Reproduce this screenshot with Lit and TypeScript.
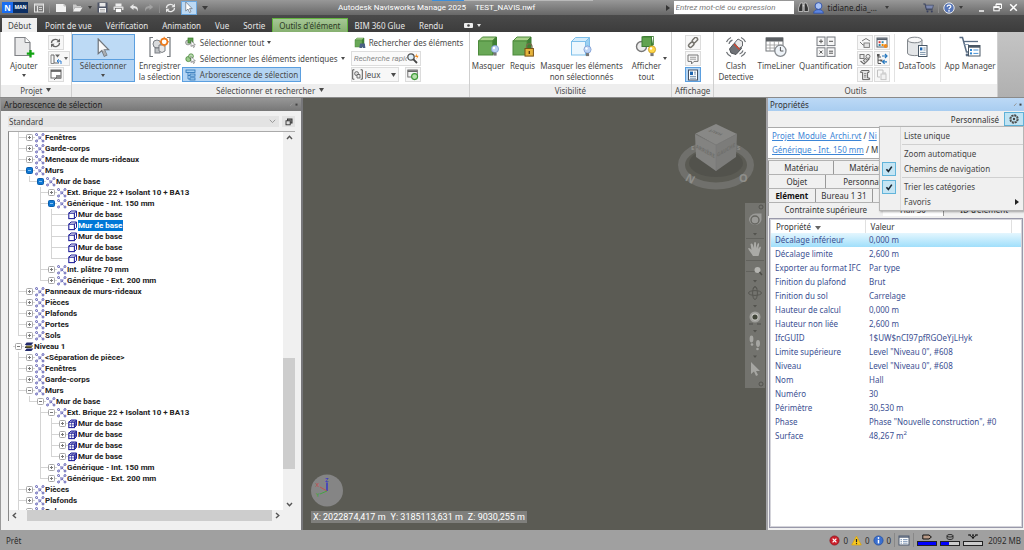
import { LitElement, html, svg, css, nothing, TemplateResult } from "lit";
import { customElement, property } from "lit/decorators.js";
import { classMap } from "lit/directives/class-map.js";

type Icon = { w: number; h: number; body: TemplateResult };

const cube = (x: number, y: number, s: number) => svg`
  <g transform="translate(${x} ${y}) scale(${s})">
    <path d="M0 4 L4 0 H18 L14 4Z" fill="#a9d18a" stroke="#4d8a3c"/>
    <path d="M14 4 L18 0 V14 L14 18Z" fill="#3f7f35" stroke="#3f7f35"/>
    <rect x="0" y="4" width="14" height="14" fill="#69a857" stroke="#4d8a3c"/>
  </g>`;
const bulb = (x: number, y: number, c: string, e: string) => svg`
  <g transform="translate(${x} ${y})">
    <circle cx="4" cy="4" r="3.6" fill="${c}" stroke="${e}" stroke-width=".8"/>
    <circle cx="3" cy="3" r="1.2" fill="#fff"/>
    <rect x="2.4" y="7.6" width="3.2" height="3" fill="#777"/>
  </g>`;
const lens = svg`<circle cx="4" cy="4" r="3.2" fill="#dff0fb" stroke="#555" stroke-width="1.3"/><path d="M6.4 6.4L10 10" stroke="#444" stroke-width="1.8"/>`;
const arrow = (f: string, k: string) => svg`<path d="M1 0 V12 L4 9.4 L6 14 L8 13 L6 8.8 H9.6Z" fill="${f}" stroke="${k}" stroke-width="1"/>`;
const dots = svg`<g stroke="#9c9cd2" stroke-width=".8"><path d="M1.5 1.5L8 8M8 1.5L1.5 8"/></g>
  <g fill="#e6e6f6" stroke="#4a4aaa" stroke-width=".8"><circle cx="1.5" cy="1.5" r="1"/><circle cx="8" cy="1.5" r="1"/><circle cx="1.5" cy="8" r="1"/><circle cx="8" cy="8" r="1"/><circle cx="4.8" cy="4.8" r="1"/></g>`;
const box = svg`<path d="M.8 3.2L3 1H8.5V6.4L6.4 8.6M6.4 3.2L8.5 1" fill="none" stroke="#23239a" stroke-width="1"/><rect x=".8" y="3.2" width="5.6" height="5.4" fill="#fff" stroke="#23239a" stroke-width="1.1"/>`;
const gear = svg`<circle cx="5" cy="5" r="4" fill="none" stroke="#444" stroke-width="1.3" stroke-dasharray="2.2 .9"/><circle cx="5" cy="5" r="3.1" fill="none" stroke="#555" stroke-width=".8"/><circle cx="5" cy="5" r="1.2" fill="#444"/>`;

const icons: Record<string, Icon> = {
  panel: { w: 10, h: 10, body: svg`<rect x=".5" y="1" width="9" height="8" fill="none" stroke="#e4e4e4"/><path d="M.5 2H9.5M3.5 3V9" stroke="#e4e4e4" stroke-width="1.2"/><path d="M5 4.5H8M5 6.5H8" stroke="#e4e4e4" stroke-width=".8"/>` },
  file: { w: 12, h: 10, body: svg`<path d="M1 1H9L11 3V9H1Z" fill="#f2f2f2"/><path d="M9 1V3H11" fill="none" stroke="#999" stroke-width=".6"/>` },
  folder: { w: 11, h: 10, body: svg`<path d="M1 1.5H4L5 3H9V4H3L1 8Z" fill="#c9c9c9"/><path d="M3 4.5H10.5L8 8.5H1Z" fill="#efefef"/>` },
  save: { w: 11, h: 11, body: svg`<rect x=".5" y=".5" width="10" height="10" fill="#4e5566"/><rect x="2.5" y="1" width="6" height="3.5" fill="#e8e8e8"/><rect x="2" y="6" width="7" height="4.5" fill="#f6f6f6"/><path d="M3 7.5H8M3 9H8" stroke="#888" stroke-width=".6"/>` },
  print: { w: 11, h: 10, body: svg`<rect x="2.5" y=".5" width="6" height="3" fill="#eee"/><rect x=".5" y="3.5" width="10" height="3.6" rx=".6" fill="#dedede"/><rect x="2.5" y="5.5" width="6" height="4" fill="#fff" stroke="#555" stroke-width=".6"/>` },
  undo: { w: 10, h: 10, body: svg`<path d="M4.5 1L.8 4L4.5 7V5.2C7 5 8 6 8.4 8.4C9.8 5 8 2.9 4.5 2.9Z" fill="#e6e6e6"/>` },
  redo: { w: 10, h: 10, body: svg`<path d="M5.5 1L9.2 4L5.5 7V5.2C3 5 2 6 1.6 8.4C.2 5 2 2.9 5.5 2.9Z" fill="#a2a2a2"/>` },
  sync: { w: 11, h: 10, body: svg`<path d="M1.5 5A4 3.5 0 0 1 8.6 2.8M9.5 5A4 3.5 0 0 1 2.4 7.2" fill="none" stroke="currentColor" stroke-width="1.3"/><path d="M10 .5V4.2H6.4ZM1 9.5V5.8H4.6Z" fill="currentColor"/>` },
  cursorS: { w: 8, h: 11, body: svg`<g transform="scale(.75)">${arrow("#fff", "#6b7480")}</g>` },
  binoc: { w: 11, h: 11, body: svg`<path d="M2.5 1H4.8V9.5H.6V6ZM8.5 1H6.2V9.5H10.4V6Z" fill="#333" stroke="#ddd" stroke-width=".7"/><path d="M4.8 3.8H6.2" stroke="#ddd"/>` },
  user: { w: 11, h: 12, body: svg`<circle cx="5.5" cy="4" r="3.4" fill="#a9c3f5" stroke="#2b4ea8" stroke-width=".9"/><path d="M.6 11.2C1 8.4 3 7.6 5.5 7.6S10 8.4 10.4 11.2Z" fill="#5d86e0" stroke="#2b4ea8" stroke-width=".8"/>` },
  cart: { w: 11, h: 10, body: svg`<path d="M.3 1H2L3.6 6.8H9.6" fill="none" stroke="#39415e" stroke-width="1.1"/><path d="M2.5 2.2H10.5L9.4 5.8H3.4Z" fill="#7c88b0" stroke="#39415e" stroke-width=".6"/><circle cx="4.5" cy="8.6" r="1" fill="#39415e"/><circle cx="8.8" cy="8.6" r="1" fill="#39415e"/>` },
  help: { w: 12, h: 12, body: svg`<circle cx="6" cy="6" r="5.2" fill="#5675b8" stroke="#e8e8e8" stroke-width="1"/><path d="M4.2 4.8C4.2 2.4 7.9 2.5 7.8 4.7C7.7 5.9 6 5.8 6 7.2" fill="none" stroke="#fff" stroke-width="1.2"/><circle cx="6" cy="8.9" r=".8" fill="#fff"/>` },
  min: { w: 9, h: 9, body: svg`<path d="M2 8H7" stroke="#fff" stroke-width="1.4"/>` },
  restore: { w: 9, h: 9, body: svg`<path d="M3 3.5V1H8.5V5.5H6.5" fill="none" stroke="#fff"/><path d="M3 1.4H8.5M.8 4.2H6.2" stroke="#fff" stroke-width="1.4"/><rect x=".8" y="3.8" width="5.4" height="4" fill="none" stroke="#fff"/>` },
  close: { w: 9, h: 9, body: svg`<path d="M1.2 1.2L7.8 7.8M7.8 1.2L1.2 7.8" stroke="#fff" stroke-width="1.5"/>` },
  cam: { w: 9, h: 5, body: svg`<rect width="9" height="5" rx="1" fill="#eee"/><circle cx="4.5" cy="2.5" r="1.3" fill="#444"/>` },
  add: { w: 22, h: 22, body: svg`<path d="M2 1.5H12L17 6.5V19.5H2Z" fill="#e9e9ea" stroke="#808286" stroke-width="1.2"/><path d="M12 1.5V6.5H17" fill="#fff" stroke="#808286"/><path d="M17.5 14V21.5M13.8 17.7H21.3" stroke="#12a312" stroke-width="2.3"/>` },
  reset: { w: 12, h: 12, body: svg`<path d="M1 2H4V10H9" fill="none" stroke="#666"/><path d="M1 2V10.5H4" fill="none" stroke="#888"/><path d="M5 1.5H10L7.5 4.5Z" fill="#666"/><path d="M7 8H11V11M7 8L9 6.3M7 8L9 9.8" fill="none" stroke="#2b7cd3"/>` },
  options: { w: 12, h: 12, body: svg`<rect x="1" y="1" width="10" height="8" fill="#fff" stroke="#666"/><path d="M1 2H11" stroke="#555" stroke-width="1.6"/><rect x="6" y="6" width="5" height="4" fill="#8b8b8b"/><path d="M4 11L7 8" stroke="#666"/>` },
  cursorL: { w: 14, h: 20, body: svg`<g transform="translate(1 1) scale(1.22)">${arrow("#fafafa", "#70757b")}<path d="M6 8.8L8 13L6 14L4.6 10Z" fill="#a8acb0"/></g>` },
  saveSel: { w: 22, h: 22, body: svg`<path d="M4 1.5H1V20.5H4M18 1.5H21V20.5H18" fill="none" stroke="#72777c" stroke-width="1.2"/><circle cx="8" cy="8" r="4" fill="#d9dbdd" stroke="#7b7f84"/><rect x="6" y="12" width="5" height="5" fill="#bfc2c5" stroke="#7b7f84"/><path d="M10 9L16 9L16 15Q13 18 10 15Z" fill="#e8e8e8" stroke="#7b7f84"/><circle cx="15.2" cy="5.8" r="3.2" fill="#fff" stroke="#ee7b1b" stroke-width="1.6"/><path d="M15.2 .8V3M15.2 8.6V10.8M10.4 5.8H12.4M18 5.8H20" stroke="#ee7b1b"/>` },
  selAll: { w: 12, h: 11, body: svg`<circle cx="3" cy="5.5" r="2.4" fill="#cfd3cf" stroke="#777" stroke-width=".7"/><rect x="3" y="1" width="5" height="5" fill="#5d9f4c" stroke="#3b7a2d" stroke-width=".7"/><g transform="translate(5.5 3.5) scale(.5)">${arrow("#fff", "#444")}</g>` },
  selSame: { w: 12, h: 11, body: svg`<circle cx="3.4" cy="6" r="2.6" fill="#9dcc8e" stroke="#3b7a2d" stroke-width=".7"/><circle cx="6" cy="3.2" r="2.4" fill="#b9dcae" stroke="#3b7a2d" stroke-width=".7"/><g transform="translate(5.5 3.5) scale(.5)">${arrow("#fff", "#444")}</g>` },
  tree: { w: 12, h: 12, body: svg`<path d="M3 3V10H6M3 6.5H6" fill="none" stroke="#2a72b5" stroke-width=".8"/><g fill="#9fcdf2" stroke="#2a72b5" stroke-width=".8"><rect x="1" y="1" width="9" height="2.4"/><rect x="5" y="5" width="5" height="2.2"/><rect x="5" y="8.8" width="5" height="2.2"/></g>` },
  find: { w: 12, h: 12, body: svg`${cube(1, 1, 0.5)}<path d="M6 6.4L5.4 11H8L8.4 8.6L8.8 11H11.4L10.8 6.4Z" fill="#4a5f86"/>` },
  quick: { w: 12, h: 12, body: svg`${lens}<path d="M9.5 .5L8 4H10L9.4 6.4L11.6 2.8H9.8Z" fill="#f08a1c"/>` },
  sets: { w: 11, h: 11, body: svg`<path d="M2.4 .8H.7V10.2H2.4M8.6 .8H10.3V10.2H8.6" fill="none" stroke="#555"/><circle cx="4.6" cy="4.6" r="2" fill="#ddd" stroke="#555" stroke-width=".8"/><path d="M5 5.5H8V9H5Z" fill="#eee" stroke="#555" stroke-width=".8"/>` },
  setsMgr: { w: 12, h: 12, body: svg`<rect x=".8" y="1" width="9.5" height="7" fill="#f4f4f4" stroke="#666" stroke-width=".9"/><path d="M.8 2.2H10.3" stroke="#666" stroke-width="1.6"/><circle cx="7.6" cy="7.6" r="3" fill="#b6e0ac" stroke="#3d9a36" stroke-width="1.1"/>` },
  hide: { w: 22, h: 22, body: svg`${cube(1.5, 1, 1)}${bulb(14, 9, "#bcd3f5", "#7d9cd2")}` },
  need: { w: 22, h: 22, body: svg`${cube(1, 1, 1)}<path d="M14.5 13V10.5A2.7 2.7 0 0 1 20 10.5V13" fill="none" stroke="#7b6a4a" stroke-width="1.2"/><rect x="13" y="12.5" width="8.4" height="7.6" fill="#e5b33c" stroke="#7a5316"/><rect x="16.6" y="15" width="1.4" height="3" fill="#5a3c10"/>` },
  hideRest: { w: 22, h: 22, body: svg`<path d="M1.5 5.5L5.5 1.5H19.5L15.5 5.5Z" fill="#d5ecfb" stroke="#7dbfea"/><path d="M15.5 5.5L19.5 1.5V15.5L15.5 19Z" fill="#9bd0f2" stroke="#7dbfea"/><rect x="1.5" y="5.5" width="14" height="13.5" fill="#ecf7fe" stroke="#7dbfea"/>${bulb(13.5, 9.5, "#bcd3f5", "#7d9cd2")}` },
  showAll: { w: 22, h: 22, body: svg`<circle cx="6.5" cy="10.5" r="5" fill="#ececec" stroke="#777" stroke-width="1.4"/><rect x="7" y="1" width="9.5" height="9.5" fill="#62a34f" stroke="#3f7f35"/><path d="M7 1L9 0H18.5L16.5 1M18.5 0V9L16.5 10.5" fill="#3f7f35" stroke="#3f7f35" stroke-width=".6"/>${bulb(13, 9.5, "#ffd84a", "#c9991c")}` },
  link: { w: 12, h: 12, body: svg`<g fill="none" stroke="#77756f" stroke-width="1.5"><rect x="5.6" y="1.5" width="6" height="3.6" rx="1.8" transform="rotate(-45 8 4)"/><rect x="1.4" y="6.2" width="6" height="3.6" rx="1.8" transform="rotate(-45 4 8)"/></g>` },
  note: { w: 12, h: 12, body: svg`<path d="M1 2H11V8.4H7L4.5 11V8.4H1Z" fill="#f6f6f6" stroke="#777"/><path d="M3 4.3H9M3 6.2H9" stroke="#888" stroke-width=".8"/>` },
  props: { w: 12, h: 12, body: svg`<rect x="1.5" y="1" width="9" height="10" fill="#fff" stroke="#444f60"/><rect x="3" y="2.6" width="3" height="3.4" fill="#1d65b0"/><path d="M7 3.2H9M7 5H9M3 7.4H9M3 9.2H9" stroke="#56789c" stroke-width=".8"/>` },
  clash: { w: 22, h: 22, body: svg`<g fill="none" stroke="#6f7377" stroke-width="1.2"><path d="M1.5 6A8 8 0 0 1 6 1.5M4 8A5 5 0 0 1 7.5 4.2M20.5 16A8 8 0 0 1 16 20.5M18 14.5A5 5 0 0 1 14.5 18M20.5 6A8 8 0 0 0 16 1.5M1.5 16A8 8 0 0 0 6 20.5"/></g><path d="M4.5 13L9 7.5H14.5L16.5 12.5L11 18.5L6 17Z" fill="#6f7276" stroke="#515458"/><path d="M9.5 7L13 3L17.5 5.5V10L14 12.5L11.5 9.5Z" fill="#e9e9e9" stroke="#66696d"/><path d="M9 8L14.5 13.5" stroke="#d8442b" stroke-width="1.3"/>` },
  timeline: { w: 22, h: 22, body: svg`<rect x="1" y="2" width="17" height="13" fill="#fff" stroke="#73777b"/><rect x="1" y="1.5" width="17" height="4" fill="#5c6064"/><path d="M1 9H18M1 12H18M5 5V15M9.3 5V15M13.6 5V15" stroke="#999" stroke-width=".8"/><circle cx="15.4" cy="14.8" r="5.6" fill="#eef3f8" stroke="#85898e" stroke-width="1.3"/><path d="M15.4 11V15H18.4" fill="none" stroke="#555"/>` },
  quant: { w: 20, h: 22, body: svg`<g fill="#f7f7f7" stroke="#777b80"><rect x="1" y="1" width="8" height="8.6"/><rect x="11" y="1" width="8" height="8.6"/><rect x="1" y="11.8" width="8" height="8.6"/><rect x="11" y="11.8" width="8" height="8.6"/></g><path d="M3 5.3H7M5 3.3V7.3M13 5.3H17M3.5 14.6L6.5 17.6M6.5 14.6L3.5 17.6M13 15.2H17M13 17.2H17" stroke="#555"/>` },
  tool1: { w: 12, h: 12, body: svg`<path d="M3 4L7 1.5L11 4" fill="none" stroke="#777"/><path d="M1 5L4 8H10" fill="none" stroke="#777"/><rect x="5" y="6" width="5.4" height="4.4" fill="#e3e3e3" stroke="#777" stroke-width=".9"/>` },
  tool2: { w: 12, h: 12, body: svg`<rect x="1" y="1" width="10" height="9" fill="#fff" stroke="#58626e"/><path d="M1 2.2H11" stroke="#58626e" stroke-width="1.8"/><g><rect x="2.6" y="4.2" width="2" height="2" fill="#d33"/><rect x="5.6" y="4.2" width="2" height="2" fill="#38a"/><rect x="2.6" y="7" width="2" height="2" fill="#38a"/><rect x="5.6" y="7" width="2" height="2" fill="#e80"/></g><circle cx="9.6" cy="9" r="2" fill="#f08a1c"/>` },
  tool3: { w: 12, h: 12, body: svg`<rect x="1" y="1.5" width="4" height="4" fill="#eee" stroke="#777"/><circle cx="9" cy="3.4" r="2" fill="#eee" stroke="#777"/><path d="M1.5 8L5 11L10.5 5.5" fill="none" stroke="#666" stroke-width="1.1"/><rect x="5" y="6" width="3" height="3" fill="#ddd" stroke="#777" transform="rotate(45 6.5 7.5)"/>` },
  tool4: { w: 12, h: 12, body: svg`<path d="M2 1.5V10.5H5M2 4H5M2 7.2H5" fill="none" stroke="#555"/><rect x="1" y="1" width="2.6" height="2.4" fill="#555"/><rect x="4.4" y="6.6" width="2" height="2" fill="#555"/><path d="M6 3H11M9 1L11 3L9 5M11 8.8H6.6M8.6 6.8L6.6 8.8L8.6 10.8" fill="none" stroke="#2476bd" stroke-width="1.2"/>` },
  tool5: { w: 12, h: 12, body: svg`<path d="M2.4 1.5H10V3.4H8.6V9H10.6V10.6H3.6V3.4H1.4Z" fill="#e5e5e5" stroke="#666"/><path d="M5 4.6H7.4M5 6.4H7.4M5 8H7.4" stroke="#777" stroke-width=".8"/>` },
  tool6: { w: 12, h: 12, body: svg`<path d="M4 1H1.5V8H4M7 3.6V1H4" fill="none" stroke="#c2c2c2"/><rect x="5" y="5" width="5" height="5.6" fill="#f1f1f1" stroke="#c6c6c6"/><path d="M6 4H10" stroke="#c2c2c2"/>` },
  data: { w: 22, h: 22, body: svg`<path d="M1.5 4V17C1.5 20.5 16 20.5 16 17V4Z" fill="#e4e6e8" stroke="#83888d"/><ellipse cx="8.8" cy="4" rx="7.2" ry="2.8" fill="#f8f8f8" stroke="#83888d"/><rect x="12.5" y="9.5" width="8.5" height="11" fill="#fff" stroke="#4a5866"/><rect x="14" y="11.4" width="2.4" height="3" fill="#1d65b0"/><path d="M17.4 12H19.6M17.4 14H19.6M14 16.4H19.6M14 18.4H19.6" stroke="#5b7894" stroke-width=".8"/>` },
  appMgr: { w: 22, h: 22, body: svg`<path d="M.5 1.5H3.5L7.5 16H12" fill="none" stroke="#5a6d84" stroke-width="1.5"/><path d="M4.6 5.5H19" stroke="#5a6d84" stroke-width="1.3"/><path d="M5.5 8.5H10" stroke="#8fa1b5"/><circle cx="8" cy="19" r="1.4" fill="#5a6d84"/><rect x="9.5" y="9.5" width="11.5" height="10.5" fill="#fff" stroke="#4a5866"/><rect x="9.5" y="9.3" width="11.5" height="2.4" fill="#4a5866"/><rect x="11" y="13" width="2" height="2" fill="#2f86d2"/><rect x="11" y="16.4" width="2" height="2" fill="#2f86d2"/><path d="M14.4 14H19.4M14.4 17.4H19.4" stroke="#4793d8"/>` },
  dots: { w: 10, h: 10, body: dots },
  box: { w: 10, h: 10, body: box },
  boxes: { w: 10, h: 10, body: svg`${box}<path d="M3.6 3.2V8.6M.8 5.9H8.4M2.6 2L8 2M5.6 1L3.6 3.2M7.5 2.2V7.6" stroke="#23239a" stroke-width=".7"/>` },
  level: { w: 10, h: 10, body: svg`<path d="M2.6 .6H9.4L7.4 3H.8ZM2.6 6.4H9.4L7.4 9H.8Z" fill="#222a6c"/><path d="M2 3.6H9L7.4 6H.8Z" fill="#222"/><path d="M2.2 4.8H8" stroke="#c9b53a" stroke-width=".8"/>` },
  gear: { w: 10, h: 10, body: gear },
  dup: { w: 8, h: 8, body: svg`<rect x="2.5" y="1" width="4.5" height="4" fill="#888" stroke="#333"/><rect x="1" y="2.8" width="4.2" height="4" fill="#ddd" stroke="#333" stroke-width=".9"/>` },
  chev: { w: 7, h: 5, body: svg`<path d="M.8 .8L3.5 3.6L6.2 .8" fill="none" stroke="#999"/>` },
  up: { w: 7, h: 7, body: svg`<path d="M1 5L3.5 2.2L6 5" fill="none" stroke="#555" stroke-width="1.4"/>` },
  down: { w: 7, h: 7, body: svg`<path d="M1 2L3.5 4.8L6 2" fill="none" stroke="#555" stroke-width="1.4"/>` },
  left: { w: 7, h: 7, body: svg`<path d="M5 1L2.2 3.5L5 6" fill="none" stroke="#555" stroke-width="1.4"/>` },
  right: { w: 7, h: 7, body: svg`<path d="M2 1L4.8 3.5L2 6" fill="none" stroke="#555" stroke-width="1.4"/>` },
  check: { w: 8, h: 8, body: svg`<path d="M1.4 4.2L3.4 6.4L6.8 1.6" fill="none" stroke="#1c2733" stroke-width="1.6"/>` },
  pin: { w: 9, h: 5, body: svg`<path d="M1 4L3.4 1.4" stroke="#999"/><rect x="6.5" y="1.6" width="2" height="2" fill="#444"/>` },
  err: { w: 11, h: 11, body: svg`<circle cx="5.5" cy="5.5" r="4.6" fill="#cc1f2b" stroke="#8b1118" stroke-width=".7"/><path d="M3.6 3.6L7.4 7.4M7.4 3.6L3.6 7.4" stroke="#fff" stroke-width="1.3"/>` },
  warn: { w: 11, h: 11, body: svg`<path d="M5.5 1L10.3 10H.7Z" fill="#f7c821" stroke="#d9a40c" stroke-width=".7"/><path d="M5.5 4V7.2" stroke="#222" stroke-width="1.2"/><circle cx="5.5" cy="8.6" r=".7" fill="#222"/>` },
  info: { w: 11, h: 11, body: svg`<circle cx="5.5" cy="5.5" r="4.6" fill="#3a6fd0" stroke="#1f4a9c" stroke-width=".7"/><path d="M5.5 4.8V8.4" stroke="#fff" stroke-width="1.5"/><circle cx="5.5" cy="3" r=".9" fill="#fff"/>` },
  sheet: { w: 12, h: 11, body: svg`<rect x="1" y="1" width="10" height="9" fill="#fff" stroke="#4c5a70"/><path d="M1 2H11" stroke="#4c5a70" stroke-width="1.4"/><path d="M2.5 4.6H4M2.5 6.4H4M2.5 8.2H4M5 4.6H9.6M5 6.4H9.6M5 8.2H9.6" stroke="#6481a8" stroke-width=".8"/>` },
  pencil: { w: 10, h: 6, body: svg`<path d="M.8 1H7L9.4 3L7 5H.8Z" fill="#b99a86" stroke="#111" stroke-width="1"/>` },
  disk: { w: 8, h: 6, body: svg`<ellipse cx="4" cy="1.8" rx="3" ry="1.3" fill="none" stroke="#111" stroke-width=".8"/><path d="M1 1.8V4.2C1 5.9 7 5.9 7 4.2V1.8" fill="none" stroke="#111" stroke-width=".8"/>` },
  net: { w: 12, h: 6, body: svg`<path d="M1 1H4M5 1H7M8 1H11M2.5 1L6 4M6 1V5M9.5 1L6 4" fill="none" stroke="#111" stroke-width="1"/>` },
};

const ico = (name: string, cls = "") => {
  const i = icons[name];
  return html`<svg class="ico ${cls}" width=${i.w} height=${i.h} viewBox="0 0 ${i.w} ${i.h}" aria-hidden="true">${i.body}</svg>`;
};
const caret = (w = 4) => html`<svg class="ico caret" width=${w} height=${w > 4 ? 4 : 3} viewBox="0 0 8 6" preserveAspectRatio="none" aria-hidden="true"><path d="M0 0H8L4 6Z" fill="currentColor"/></svg>`;

const base = css`
  * { box-sizing: border-box; }
  button, input, select { font: inherit; color: inherit; margin: 0; padding: 0; border: 0; background: none; border-radius: 0; }
  button { display: inline-flex; align-items: center; justify-content: center; }
  select { appearance: none; }
  .ico { display: block; flex: none; }
`;

@customElement("nw-titlebar")
class Titlebar extends LitElement {
  static styles = [base, css`
    :host { display: flex; align-items: center; height: 15px; color: #e9e9e9;
      background: linear-gradient(90deg, transparent 432px, #3d8fdc 432px 464px, #b9b9b9 464px 593px, transparent 593px) top / 100% 1px no-repeat,
        linear-gradient(#989898, #686868); }
    .left { display: flex; align-items: center; gap: 5px; padding-left: 2px; }
    .logo { display: flex; height: 11px; margin-right: 1px; background: #0d2f63; align-items: center; }
    .n { width: 11px; height: 11px; display: grid; place-items: center; background: #1a6df0; font-weight: 700; line-height: 10px; color: #fff; }
    .man { width: 15px; font-size: 5px; font-weight: 700; text-align: center; color: #fff; }
    .sep { width: 1px; height: 10px; background: #8d8d8d; }
    .on { width: 16px; height: 14px; background: #bcd9f4; border: 1px solid #6ea8de; }
    .caret { color: #3c3c3c; }
    .title { flex: 1; display: flex; gap: 9px; justify-content: center; white-space: nowrap; color: #fff; font-family: Roboto, sans-serif; }
    .right { display: flex; align-items: center; gap: 4px; padding-right: 6px; color: #222; }
    .q { width: 120px; height: 13px; background: #fff; padding: 0 2px; font-style: italic; font-family: Roboto, sans-serif; }
    .q::placeholder { color: #777; opacity: 1; }
    .name { margin-right: 4px; }
    .cart { margin-left: 30px; }
    .gap { display: flex; gap: 7px; margin-left: 10px; }
    .tri { border: 3px solid transparent; border-left: 4px solid #333; border-right: 0; }
  `];
  render() {
    return html`
      <div class="left">
        <span class="logo"><span class="n">N</span><span class="man">MAN</span></span>
        <button aria-label="Menu">${ico("panel")}</button><span class="sep"></span>
        <button aria-label="Nouveau">${ico("file")}</button>
        <button aria-label="Ouvrir">${ico("folder")}</button>${caret()}
        <button aria-label="Enregistrer">${ico("save")}</button>
        <button aria-label="Imprimer">${ico("print")}</button>
        <button aria-label="Annuler">${ico("undo")}</button>
        <button aria-label="Rétablir">${ico("redo")}</button><span class="sep"></span>
        <button aria-label="Actualiser">${ico("sync")}</button>
        <button class="on" aria-label="Sélectionner">${ico("cursorS")}</button>${caret(6)}
      </div>
      <div class="title"><span>Autodesk Navisworks Manage 2025</span><span>TEST_NAVIS.nwf</span></div>
      <div class="right">
        <span class="tri"></span>
        <input class="q" aria-label="Recherche" placeholder="Entrez mot-clé ou expression">
        <button aria-label="Rechercher">${ico("binoc")}</button>
        ${ico("user")}<span class="name">tidiane.dia_...</span>${caret()}
        <button class="cart" aria-label="Boutique">${ico("cart")}</button><span class="sep"></span>
        <button aria-label="Aide">${ico("help")}</button>${caret()}
        <span class="gap">
          <button aria-label="Réduire">${ico("min")}</button>
          <button aria-label="Restaurer">${ico("restore")}</button>
          <button aria-label="Fermer">${ico("close")}</button>
        </span>
      </div>`;
  }
}

@customElement("nw-ribbon")
class Ribbon extends LitElement {
  static styles = [base, css`
    :host { display: block; color: #4a4a4a; }
    .tabs { display: flex; height: 17px; padding-left: 2px; background: linear-gradient(#4a4a4a, #3c3c3c); color: #e6e6e6; align-items: end; }
    .tab { height: 14px; padding: 0 7px; }
    .tab.on { background: #f0f0f0; color: #444; padding: 0 6px; margin-right: 1px; }
    .tab.ctx { background: linear-gradient(#a6c796, #86b070); border: 1px solid #63b53f; border-bottom: 0; color: #2c3a26; padding: 0 6px; }
    .extra { display: flex; align-items: center; gap: 4px; height: 14px; padding-left: 14px; }
    .bar { display: flex; height: 65px; background: linear-gradient(#c4c4c4, #b0b0b0); border-left: 1px solid #ccc; }
    .panel { display: flex; flex-direction: column; border-right: 1px solid #cfcfcf; background: #fff; }
    .body { flex: 1; display: flex; padding: 2px 1px 2px; }
    .foot { height: 13px; display: flex; gap: 4px; align-items: center; justify-content: center; background: #eee; padding: 0 3px 1px; }
    .big { flex-direction: column; justify-content: start; line-height: 11px; padding: 2px 0 0; }
    .big .lab { margin-top: 2px; }
    .big .caret { margin-top: 3px; }
    .pj { gap: 10px; padding: 2px 1px 2px 9px; }
    .col { display: flex; flex-direction: column; gap: 1px; padding-top: 1px; }
    .sq { height: 15px; min-width: 16px; padding: 0 1px; border: 1px solid #dcdcdc; background: #f7f7f7; gap: 2px; color: #666; }
    .row { display: flex; align-items: center; justify-content: start; height: 15px; gap: 3px; padding: 0 2px; white-space: nowrap; border: 1px solid transparent; }
    .hot, .sq.hot { background: #b4d5f4; border: 1px solid #5b9fdf; }
    .select { width: 63px; border: 1px solid #5b9fdf; background: linear-gradient(#bddaf5 24px, #5b9fdf 24px 25px, #b4d4f3 25px); margin-right: 3px; padding-top: 3px; }
    .end { padding: 2px 1px 0; }
    .c1 { padding-left: 0; }
    .c1 .ids { padding-right: 3px; }
    .find { width: 117px; }
    .find .line { display: flex; gap: 6px; height: 15px; }
    .field { display: flex; align-items: center; width: 70px; height: 15px; border: 1px solid #ddd; background: #fafafa; padding-right: 1px; }
    .field input { flex: 1; min-width: 0; padding-left: 2px; font-style: italic; font-family: Roboto, sans-serif; }
    .field input::placeholder { color: #888; opacity: 1; }
    .pick { display: flex; align-items: center; width: 48px; border: 1px solid #ddd; background: #f7f7f7; padding-right: 2px; }
    .pick select { flex: 1; min-width: 0; padding-left: 2px; }
    .vis { gap: 5px; padding-left: 2px; }
    .all { display: flex; align-items: center; gap: 2px; padding: 0 3px 0 4px; }
    .aff { justify-content: center; }
    .out { gap: 4px; padding-left: 4px; }
    .grid { display: grid; grid-template-columns: 16px 16px; gap: 1px; align-content: start; padding-top: 1px; }
    .vs { width: 1px; background: #e2e2e2; }
  `];
  big(icon: string, lines: string[], withCaret = false, cls = "") {
    return html`<button class="big ${cls}">${ico(icon)}<span class="lab">${lines.map((l, i) => html`${i ? html`<br>` : nothing}${l}`)}</span>${withCaret ? caret() : nothing}</button>`;
  }
  render() {
    return html`
      <nav class="tabs">
        <button class="tab on">Début</button>
        ${["Point de vue", "Vérification", "Animation", "Vue", "Sortie"].map((t) => html`<button class="tab">${t}</button>`)}
        <button class="tab ctx">Outils d'élément</button>
        <button class="tab">BIM 360 Glue</button><button class="tab">Rendu</button>
        <span class="extra">${ico("cam")}${caret()}</span>
      </nav>
      <div class="bar">
        <section class="panel">
          <div class="body pj">
            ${this.big("add", ["Ajouter"], true)}
            <div class="col">
              <div><button class="sq" aria-label="Actualiser">${ico("sync")}</button></div>
              <button class="sq" aria-label="Réinitialiser tout">${ico("reset")}${caret()}</button>
              <div><button class="sq" aria-label="Options du fichier">${ico("options")}</button></div>
            </div>
          </div>
          <div class="foot">Projet ${caret(5)}</div>
        </section>
        <section class="panel">
          <div class="body c1">
            <button class="big select">${ico("cursorL")}<span class="lab">Sélectionner</span>${caret()}</button>
            ${this.big("saveSel", ["Enregistrer", "la sélection"], false, "end")}
            <div class="col ids">
              <button class="row">${ico("selAll")}Sélectionner tout ${caret()}</button>
              <button class="row">${ico("selSame")}Sélectionner les éléments identiques ${caret()}</button>
              <div><button class="row hot">${ico("tree")}Arborescence de sélection</button></div>
            </div>
            <div class="col find">
              <button class="row">${ico("find")}Rechercher des éléments</button>
              <div class="field"><input aria-label="Recherche rapide" placeholder="Recherche rapide">${ico("quick")}</div>
              <div class="line">
                <div class="pick">${ico("sets")}<select aria-label="Jeux"><option>Jeux</option></select>${caret(5)}</div>
                <button class="sq" aria-label="Gérer les jeux">${ico("setsMgr")}</button>
              </div>
            </div>
          </div>
          <div class="foot">Sélectionner et rechercher ${caret(5)}</div>
        </section>
        <section class="panel">
          <div class="body vis">
            ${this.big("hide", ["Masquer"])}${this.big("need", ["Requis"])}
            ${this.big("hideRest", ["Masquer les éléments", "non sélectionnés"])}
            <div class="all">${this.big("showAll", ["Afficher", "tout"])}${caret()}</div>
          </div>
          <div class="foot">Visibilité</div>
        </section>
        <section class="panel">
          <div class="body aff">
            <div class="col">
              <button class="sq" aria-label="Liens">${ico("link")}</button>
              <button class="sq" aria-label="Info-bulles">${ico("note")}</button>
              <button class="sq hot" aria-label="Propriétés">${ico("props")}</button>
            </div>
          </div>
          <div class="foot">Affichage</div>
        </section>
        <section class="panel">
          <div class="body out">
            ${this.big("clash", ["Clash", "Detective"])}${this.big("timeline", ["TimeLiner"])}${this.big("quant", ["Quantification"])}
            <div class="grid">${[1, 2, 3, 4, 5, 6].map((n) => html`<button class="sq" aria-label="Outil ${n}">${ico("tool" + n)}</button>`)}</div>
            <span class="vs"></span>${this.big("data", ["DataTools"])}
            <span class="vs"></span>${this.big("appMgr", ["App Manager"])}
          </div>
          <div class="foot">Outils</div>
        </section>
      </div>`;
  }
}

type Node = { l: number; t: string; k: "dots" | "box" | "boxes" | "level"; e: "+" | "-" | "b" | ""; sel?: boolean };
const n = (l: number, t: string, e: Node["e"] = "+", k: Node["k"] = "dots", sel = false): Node => ({ l, t, k, e, sel });
const nodes: Node[] = [
  n(1, "Fenêtres"), n(1, "Garde-corps"), n(1, "Meneaux de murs-rideaux"), n(1, "Murs", "b"),
  n(2, "Mur de base", "b"), n(3, "Ext. Brique 22 + Isolant 10 + BA13"), n(3, "Générique - Int. 150 mm", "b"),
  n(4, "Mur de base", "", "box"), n(4, "Mur de base", "", "box", true), n(4, "Mur de base", "", "box"),
  n(4, "Mur de base", "", "box"), n(4, "Mur de base", "", "box"),
  n(3, "Int. plâtre 70 mm"), n(3, "Générique - Ext. 200 mm"),
  n(1, "Panneaux de murs-rideaux"), n(1, "Pièces"), n(1, "Plafonds"), n(1, "Portes"), n(1, "Sols"),
  n(0, "Niveau 1", "-", "level"), n(1, "<Séparation de pièce>"), n(1, "Fenêtres"), n(1, "Garde-corps"),
  n(1, "Murs", "-"), n(2, "Mur de base", "-"), n(3, "Ext. Brique 22 + Isolant 10 + BA13", "-"),
  n(4, "Mur de base", "+", "boxes"), n(4, "Mur de base", "+", "boxes"), n(4, "Mur de base", "+", "boxes"), n(4, "Mur de base", "+", "boxes"),
  n(3, "Générique - Int. 150 mm"), n(3, "Générique - Ext. 200 mm"),
  n(1, "Pièces"), n(1, "Plafonds"), n(1, "Sols"),
];
const continues = (i: number, level: number) => {
  for (let j = i + 1; j < nodes.length; j++) {
    if (nodes[j].l < level) return false;
    if (nodes[j].l === level) return true;
  }
  return false;
};

@customElement("nw-tree")
class Tree extends LitElement {
  static styles = [base, css`
    :host { display: flex; flex-direction: column; min-height: 0; background: #f0f0f0; border-left: 1px solid #999; border-right: 2px solid #77777a; color: #222; }
    .head { display: flex; justify-content: space-between; align-items: center; height: 13px; padding: 0 3px; background: linear-gradient(#979797, #777); }
    .top { display: flex; gap: 3px; padding: 5px 6px 4px 7px; height: 20px; }
    .combo { flex: 1; display: flex; align-items: center; background: #e3e3e3; padding-right: 3px; color: #444; }
    .combo select { flex: 1; padding-left: 1px; }
    .dup { width: 13px; background: #e3e3e3; }
    .frame { flex: 1; min-height: 0; display: grid; grid-template: minmax(0, 1fr) 11px / minmax(0, 1fr) 12px; margin: 0 6px 9px 7px; border-left: 1px solid #888; border-top: 1px solid #aaa; background: #fff; }
    .list { margin: 0; padding: 0 0 0 4px; list-style: none; overflow: hidden; font-weight: 700; font-family: Roboto, sans-serif; }
    .node { display: flex; height: 11px; align-items: center; white-space: nowrap; }
    .g { width: 11px; height: 11px; flex: none; background: linear-gradient(#d4d4d4, #d4d4d4) 5px 0 / 1px 0 no-repeat; }
    .g.full { background-size: 1px 11px; }
    .g.half { background-size: 1px 6px; }
    .g.stub { background-image: linear-gradient(#d4d4d4, #d4d4d4), linear-gradient(#d4d4d4, #d4d4d4); background-position: 5px 0, 5px 5px; background-size: 1px 11px, 6px 1px; }
    .g.stub.half { background-size: 1px 6px, 6px 1px; }
    .x { width: 11px; height: 11px; flex: none; }
    .i { width: 10px; flex: none; }
    .lab { line-height: 11px; padding-right: 1px; }
    .lab.sel { background: #0078d7; color: #fff; }
    .vbar, .hbar { display: flex; align-items: center; background: #f0f0f0; }
    .vbar { flex-direction: column; padding: 2px 0; }
    .hbar { padding: 0 2px; }
    .vbar i { width: 12px; height: 111px; background: #cdcdcd; margin: auto 0 32px; }
    .hbar i { flex: 1; height: 11px; background: #cdcdcd; margin: 0 2px 0 9px; }
  `];
  expander(e: Node["e"]) {
    if (e === "") return svg`<path d="M0 5.5H11" stroke="#d4d4d4"/>`;
    if (e === "b") return svg`<path d="M0 5.5H11" stroke="#d4d4d4"/><rect x="2.5" y="2.5" width="6" height="6" rx="1" fill="#0f78d4" stroke="#0a5dab"/><path d="M4 5.5H7" stroke="#8cc4f2"/>`;
    return svg`<path d="M0 5.5H11" stroke="#d4d4d4"/><rect x="2.5" y="2.5" width="6" height="6" rx="1" fill="#fff" stroke="#a8a8a8"/><path d="M4 5.5H7" stroke="#777"/>${e === "+" ? svg`<path d="M5.5 4V7" stroke="#777"/>` : nothing}`;
  }
  render() {
    return html`
      <div class="head"><span>Arborescence de sélection</span>${ico("pin")}</div>
      <div class="top">
        <div class="combo"><select aria-label="Arborescence"><option>Standard</option></select>${ico("chev")}</div>
        <button class="dup" aria-label="Dupliquer">${ico("dup")}</button>
      </div>
      <div class="frame">
        <ul class="list" role="tree">
          ${nodes.map((d, i) => html`<li class="node" role="treeitem" aria-level=${d.l + 1} aria-selected=${d.sel ? "true" : "false"}>
            ${Array.from({ length: d.l }, (_, k) => {
              const go = continues(i, k + 1), own = k === d.l - 1;
              return html`<span class=${classMap({ g: true, full: go, half: own && !go, stub: own })}></span>`;
            })}
            <svg class="x" width="11" height="11" viewBox="0 0 11 11" aria-hidden="true">${this.expander(d.e)}</svg>
            <span class="i">${ico(d.k)}</span><span class=${classMap({ lab: true, sel: !!d.sel })}>${d.t}</span>
          </li>`)}
        </ul>
        <div class="vbar">${ico("up")}<i></i>${ico("down")}</div>
        <div class="hbar">${ico("left")}<i></i>${ico("right")}</div><div class="hbar"></div>
      </div>`;
  }
}

@customElement("nw-viewport")
class Viewport extends LitElement {
  static styles = [base, css`
    :host { display: block; position: relative; background: #5b5b54; overflow: hidden; font-size: 8px; }
    .cube { position: absolute; right: 11px; top: 24px; }
    .nav { position: absolute; right: 1px; top: 105px; width: 20px; height: 185px; background: #73736e; }
    .axis { position: absolute; left: 8px; bottom: 23px; }
    .pos { position: absolute; left: 8px; bottom: 7px; padding: 0 2px; line-height: 12px; font-size: 9px; font-family: Roboto, sans-serif; background: #7f7f7c; color: #fff; display: flex; gap: 5px; white-space: nowrap; }
    .t { font-size: 5px; font-weight: 700; fill: #6e6e6b; }
  `];
  render() {
    return html`
      <svg class="cube" width="78" height="68" viewBox="0 0 78 68" role="img" aria-label="ViewCube">
        <ellipse cx="39" cy="43" rx="34.500" ry="21" fill="none" stroke="#70706c" stroke-width="7"/>
        <ellipse cx="39" cy="41" rx="27" ry="14" fill="#52524c"/>
        <path d="M18.500 11.500L39 2L60 12L39 23Z" fill="#888886"/>
        <path d="M18 12L39 23V49L19 35Z" fill="#838381"/><path d="M60 12L39 23V49L59 35Z" fill="#7c7c7a"/>
        <path d="M18 12L39 23L60 12M39 23V49" fill="none" stroke="#7a7a78" stroke-width=".8"/>
        <text class="t" transform="matrix(.9 .5 0 1.1 19 26)">ARRIÈRE</text>
        <text class="t" transform="matrix(.88 -.5 0 1.1 40 35)">GAUCHE</text>
        <text class="t" transform="matrix(-.9 -.35 .7 -.5 46 12)">HAUT</text>
        <g font-weight="700" fill="#8e8e8a"><text transform="rotate(28 11 60)" x="7" y="60" font-size="11">N</text><text x="62" y="60" font-size="11">O</text><text x="14" y="28" font-size="6">E</text><text x="60" y="28" font-size="6">S</text></g>
      </svg>
      <svg class="nav" viewBox="0 0 20 185" aria-label="Barre de navigation" role="img">
        <g stroke="#62625d"><path d="M1 35.500H19M1 57.500H19M1 68.500H11" /></g>
        <circle cx="16" cy="4" r="2" fill="none" stroke="#50504b" stroke-width=".9"/>
        <path d="M4 17A6.500 6.500 0 0 1 10.500 10.500H16.500V17A6.500 6.500 0 0 1 4 17Z" fill="#9a9a97"/>
        <circle cx="10" cy="17" r="4" fill="none" stroke="#666661" stroke-width="1.400"/>
        <g fill="#53534e"><path d="M8 30H12L10 32.500ZM8 77H12L10 79.500ZM8 102H12L10 104.500ZM8 127H12L10 129.500ZM8 152.500H12L10 155Z"/></g>
        <path d="M8 53C6 50 4 47 3 45.500C4 44 5.500 45.500 6.500 47L5.500 41C6.500 40 7.500 40.500 8 42L8.800 45L9.200 39.500C10 38.500 11 39 11 40.500V45L12.800 40.500C13.800 40 14.500 40.500 14 42L13.200 46L15 43.500C16 43.500 16.200 44.500 15.500 46L13.500 53Z" fill="#aaaaa6"/>
        <circle cx="12.500" cy="67" r="3" fill="#b4b4b0"/><path d="M14.500 69L17 72" stroke="#4d4d48" stroke-width="1.500"/>
        <g fill="none" stroke="#575752" stroke-width="1"><ellipse cx="10" cy="90" rx="2.400" ry="6.500"/><ellipse cx="10" cy="90" rx="6.500" ry="2.400"/><path d="M8 86L10 83.500L12 86"/></g>
        <circle cx="10" cy="114" r="5.500" fill="#a0a09c"/><circle cx="10" cy="114" r="3.400" fill="#d0d0cb"/><circle cx="10" cy="114" r="2.600" fill="#42463a"/><path d="M4 121H8M12 121H16" stroke="#4f4f4a"/>
        <g fill="#a6a6a2"><ellipse cx="6.500" cy="136" rx="1.900" ry="3.400"/><ellipse cx="7" cy="141.500" rx="1.300" ry="1.300"/><ellipse cx="13" cy="140.500" rx="2" ry="3.400"/><ellipse cx="12.500" cy="146" rx="1.300" ry="1.300"/></g>
        <path d="M6 159V171L9 168.500L11 173L13 172L11 168H15Z" fill="#a6a6a2"/>
        <circle cx="16" cy="181" r="2" fill="none" stroke="#50504b" stroke-width=".9"/>
      </svg>
      <svg class="axis" width="32" height="33" viewBox="0 0 32 33" aria-label="Axes XYZ" role="img">
        <circle cx="16" cy="16.500" r="16" fill="#858585"/>
        <path d="M16 17V8.500" stroke="#2a2ad0" stroke-width="1.300"/><path d="M16 17L9 13" stroke="#c44" stroke-width=".8"/><path d="M16 17L9 20" stroke="#3a3" stroke-width=".8"/>
        <g font-size="6"><text x="14" y="8" fill="#2a2ad0">Z</text><text x="4.500" y="13" fill="#c44">X</text><text x="5" y="23" fill="#3a3">Y</text></g>
      </svg>
      <div class="pos"><span>X: 2022874,417 m</span><span>Y: 3185113,631 m</span><span>Z: 9030,255 m</span></div>`;
  }
}

const props: [string, string | TemplateResult][] = [
  ["Décalage inférieur", "0,000 m"], ["Décalage limite", "2,600 m"], ["Exporter au format IFC", "Par type"],
  ["Finition du plafond", "Brut"], ["Finition du sol", "Carrelage"], ["Hauteur de calcul", "0,000 m"],
  ["Hauteur non liée", "2,600 m"], ["IfcGUID", "1$UW$nCI97pfRGOeYjLHyk"], ["Limite supérieure", 'Level "Niveau 0", #608'],
  ["Niveau", 'Level "Niveau 0", #608'], ["Nom", "Hall"], ["Numéro", "30"], ["Périmètre", "30,530 m"],
  ["Phase", 'Phase "Nouvelle construction", #0'], ["Surface", html`48,267 m<sup>2</sup>`],
];
const tabRows: [string, number][][] = [
  [["Matériau", 65], ["Matériau", 64], ["", 126]],
  [["Objet", 56], ["Personnalisé", 84], ["", 115]],
  [["Elément", 46], ["Bureau 1 31", 57], ["", 152]],
  [["Contrainte supérieure", 114], ["Hall 30", 61], ["ID d'élément", 80]],
];
const menu: [string, boolean, boolean, boolean][] = [
  ["Liste unique", false, true, false], ["Zoom automatique", false, false, false], ["Chemins de navigation", true, true, false],
  ["Trier les catégories", true, false, false], ["Favoris", false, false, true],
];

@customElement("nw-properties")
class Properties extends LitElement {
  @property({ type: Boolean }) menuOpen = true;
  static styles = [base, css`
    :host { position: relative; display: flex; flex-direction: column; min-height: 0; background: #f0f0f0; border-left: 2px solid #a4a4a8; color: #333; }
    .head { display: flex; justify-content: space-between; align-items: center; height: 13px; padding: 0 2px; background: linear-gradient(#bcd9f6, #a9cdf0); }
    .bar { display: flex; justify-content: end; align-items: center; gap: 5px; height: 17px; border-bottom: 1px solid #aaa; }
    .gear { width: 20px; height: 14px; background: #bfe3f3; border: 1px solid #5fb2d8; }
    .path { background: #fff; padding: 1px 4px 1px; line-height: 14px; white-space: nowrap; overflow: hidden; }
    .path a { color: #3c85d6; }
    .tabs { display: flex; flex-direction: column; border-top: 1px solid #aaa; padding-top: 1px; }
    .line { display: flex; height: 14px; border-top: 1px solid #b2b2b2; }
    .tab { flex: 1 1 0; min-width: 0; border-left: 1px solid #999; white-space: nowrap; overflow: hidden; }
    .tab.bold { font-weight: 700; color: #111; }
    .tab.on { background: #fff; border: 0; }
    .box { flex: 1; margin: 2px 1px 2px; border: 1px solid #99a; outline: 1px solid #d4d4da; outline-offset: -2px; background: #fff; padding: 1px; }
    table { width: 100%; border-collapse: collapse; table-layout: fixed; }
    .kc { width: 94px; } .ec { width: 10px; }
    th { font-weight: 400; text-align: left; height: 13px; padding: 0 0 0 5px; border-right: 1px solid #e0e0e0; white-space: nowrap; }
    th:last-child { border: 0; }
    th .caret { display: inline-block; margin-left: 4px; vertical-align: middle; color: #666; }
    td { height: 14px; padding: 0 0 0 4px; color: #3b4f92; white-space: nowrap; line-height: 12px; }
    .sel td { background: linear-gradient(#e4f6fe, #a0dffb); }
    sup { font-size: 6px; line-height: 0; }
    .menu { position: absolute; right: 0; top: 28px; width: 145px; margin: 0; padding: 1px 0; list-style: none; border: 1px solid #b5b5b5; background: linear-gradient(90deg, #f0f0f0 20px, #dadada 20px 21px, #f0f0f0 21px); box-shadow: 1px 1px 2px #0005; }
    .menu li { display: flex; }
    .mi { width: 100%; height: 15px; justify-content: start; padding-left: 2px; color: #444; }
    .mark { width: 14px; height: 14px; margin-right: 8px; display: grid; place-items: center; border: 1px solid transparent; flex: none; }
    .mark.on { border-color: #62b4da; background: #c5e5f4; }
    .sub { margin: 0 4px 0 auto; border: 3px solid transparent; border-left: 4px solid #222; border-right: 0; }
    .rule { flex: 1; border: 0; border-top: 1px solid #d0d0d0; margin: 1px 0 1px 22px; }
  `];
  toggle() { this.menuOpen = !this.menuOpen; }
  render() {
    return html`
      <div class="head"><span>Propriétés</span>${ico("pin")}</div>
      <div class="bar"><span>Personnalisé</span><button class="gear" aria-label="Options" @click=${this.toggle}>${ico("gear")}</button></div>
      <div class="path"><a href="#">Projet_Module_Archi.rvt</a> / <a href="#">Ni</a><br><a href="#">Générique - Int. 150 mm</a> / M</div>
      <div class="tabs" role="tablist">
        ${tabRows.map((r) => html`<div class="line">${r.map(([t, w]) => html`<button role="tab" style="flex-grow:${w}" class=${classMap({ tab: true, bold: t === "Elément", on: t === "Hall 30" })}>${t}</button>`)}</div>`)}
      </div>
      <div class="box">
        <table>
          <thead><tr><th class="kc">Propriété${caret(6)}</th><th>Valeur</th><th class="ec"></th></tr></thead>
          <tbody>${props.map(([k, v], i) => html`<tr class=${i ? "" : "sel"}><td>${k}</td><td colspan="2">${v}</td></tr>`)}</tbody>
        </table>
      </div>
      ${this.menuOpen ? html`<ul class="menu" role="menu">
        ${menu.map(([t, on, rule, sub]) => html`<li role="none"><button class="mi" role="menuitem"><span class=${classMap({ mark: true, on })}>${on ? ico("check") : nothing}</span>${t}${sub ? html`<span class="sub"></span>` : nothing}</button></li>
          ${rule ? html`<li role="none"><hr class="rule"></li>` : nothing}`)}
      </ul>` : nothing}`;
  }
}

@customElement("nw-status")
class Status extends LitElement {
  static styles = [base, css`
    :host { display: flex; align-items: center; gap: 3px; height: 20px; padding: 0 3px 0 6px; background: #a0a0a0; color: #2b2b2b; }
    .ready { margin-right: auto; }
    .sep { width: 1px; height: 14px; background: #888; }
    .m { display: flex; flex-direction: column; align-items: center; gap: 1px; width: 20px; }
    .t { width: 20px; height: 5px; border: 1px solid #222; background: #ccc; }
    .f { display: block; height: 3px; background: #00f; }
    .mb { margin-left: 2px; }
  `];
  render() {
    const meters: [string, number][] = [["pencil", 100], ["disk", 45], ["net", 0]];
    return html`<span class="ready">Prêt</span>
      ${["err", "warn", "info"].map((k) => html`${ico(k)}<span>0</span>`)}
      <span class="sep"></span><button aria-label="Navigateur de feuilles">${ico("sheet")}</button><span class="sep"></span>
      ${meters.map(([k, v]) => html`<span class="m">${ico(k)}<span class="t"><span class="f" style="width:${v}%"></span></span></span>`)}
      <span class="mb">2092 MB</span>`;
  }
}

@customElement("app-root")
class AppRoot extends LitElement {
  static styles = [base, css`
    :host { display: flex; flex-direction: column; height: 100vh; font: 8px/11px "Noto Sans", "Open Sans", sans-serif; overflow: hidden; }
    .main { flex: 1; min-height: 0; display: grid; grid-template-columns: 303px minmax(0, 1fr) 258px; border-top: 1px solid #8a8a8a; }
  `];
  render() {
    return html`<nw-titlebar></nw-titlebar><nw-ribbon></nw-ribbon>
      <div class="main"><nw-tree></nw-tree><nw-viewport></nw-viewport><nw-properties></nw-properties></div>
      <nw-status></nw-status>`;
  }
}
